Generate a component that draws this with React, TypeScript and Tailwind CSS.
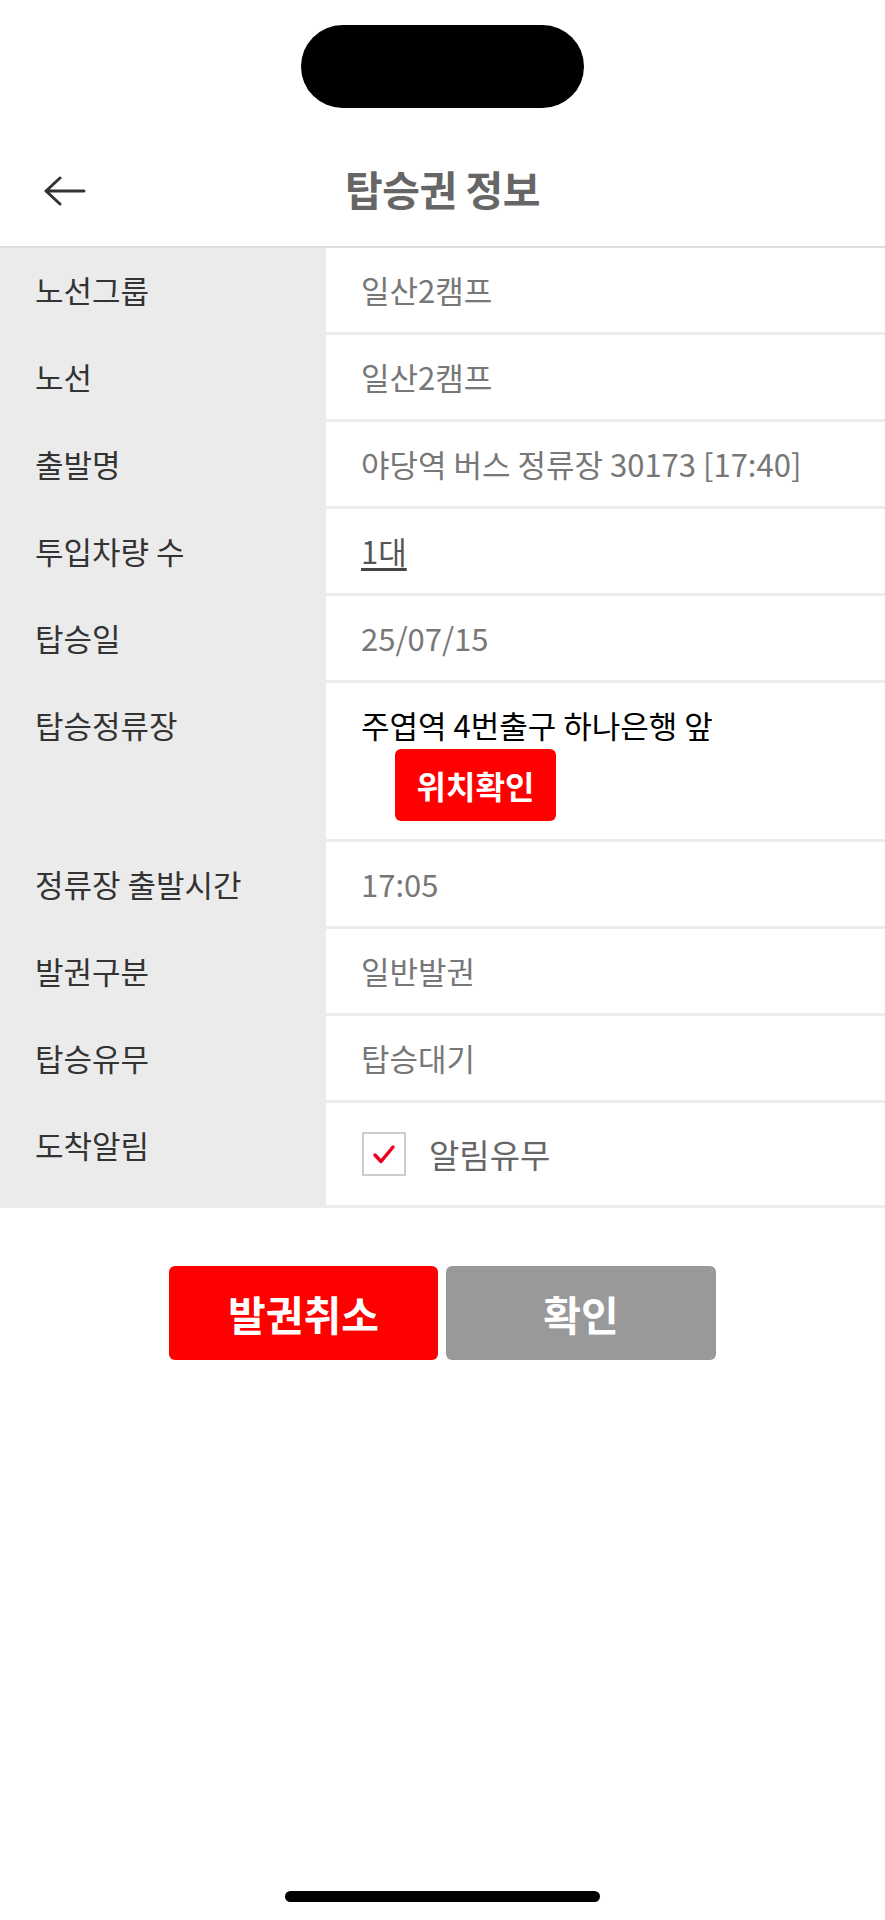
import React from "react";

const rows = [
  { label: "노선그룹", value: "일산2캠프" },
  { label: "노선", value: "일산2캠프" },
  { label: "출발명", value: "야당역 버스 정류장 30173 [17:40]" },
  { label: "투입차량 수", value: "1대", link: true },
  { label: "탑승일", value: "25/07/15" },
];

const rows2 = [
  { label: "정류장 출발시간", value: "17:05" },
  { label: "발권구분", value: "일반발권" },
  { label: "탑승유무", value: "탑승대기" },
];

const Row = ({ label, value, link }: { label: string; value: string; link?: boolean }) => (
  <div className="flex h-[87px]">
    <div className="w-[326px] shrink-0 bg-[#ebebeb] pl-[35px] flex items-center pb-[3px] text-[#333]">
      {label}
    </div>
    <div className="flex-1 pl-[35px] flex items-center border-b-[3px] border-[#ececec] text-[#777]">
      {link ? (
        <span className="underline underline-offset-[4px] decoration-[#444] text-[#555]">{value}</span>
      ) : (
        value
      )}
    </div>
  </div>
);

export default function App() {
  return (
    <div
      className="w-[885px] min-h-[1920px] bg-white flex flex-col text-[31px] leading-[40px]"
      style={{ fontFamily: '"Noto Sans CJK KR", "Noto Sans", sans-serif' }}
    >
      {/* status area */}
      <div className="h-[130px] flex justify-center">
        <div className="mt-[25px] w-[283px] h-[83px] rounded-full bg-black" />
      </div>

      {/* nav */}
      <div className="h-[118px] border-b-2 border-[#dddddd] flex items-center relative">
        <button className="absolute left-[43px] top-[46px]">
          <svg width="44" height="30" viewBox="0 0 44 30" fill="none">
            <path d="M3 15H41M17 2L3 15L17 28" stroke="#333" strokeWidth="3" strokeLinecap="round" strokeLinejoin="round" />
          </svg>
        </button>
        <h1 className="w-full text-center text-[41px] leading-[50px] font-bold text-[#666] tracking-[-0.5px]">탑승권 정보</h1>
      </div>

      {/* table */}
      <div className="flex flex-col">
        {rows.map((r) => (
          <Row key={r.label} {...r} />
        ))}
        <div className="flex h-[159px]">
          <div className="w-[326px] shrink-0 bg-[#ebebeb] pl-[35px] pt-[22px] text-[#333]">탑승정류장</div>
          <div className="flex-1 pl-[35px] pt-[22px] border-b-[3px] border-[#ececec]">
            <div className="text-black">주엽역 4번출구 하나은행 앞</div>
            <button className="ml-[34px] mt-[4px] w-[161px] h-[72px] rounded-[6px] bg-[#ff0000] text-white font-bold text-[32px] flex items-center justify-center">
              위치확인
            </button>
          </div>
        </div>
        {rows2.map((r) => (
          <Row key={r.label} {...r} />
        ))}
        <div className="flex h-[105px]">
          <div className="w-[326px] shrink-0 bg-[#ebebeb] pl-[35px] pt-[22px] text-[#333]">도착알림</div>
          <div className="flex-1 pl-[36px] border-b-[3px] border-[#ececec] flex items-center gap-[23px]">
            <div className="w-[44px] h-[44px] border-2 border-[#cccccc] bg-white flex items-center justify-center">
              <svg width="26" height="22" viewBox="0 0 26 22" fill="none">
                <path d="M4 12L10 18.5L22 4" stroke="#e8001c" strokeWidth="3.5" strokeLinecap="round" strokeLinejoin="round" />
              </svg>
            </div>
            <span className="text-[33px] text-[#666]">알림유무</span>
          </div>
        </div>
      </div>

      {/* buttons */}
      <div className="flex justify-center gap-[8px] mt-[58px]">
        <button className="w-[269px] h-[94px] rounded-[6px] bg-[#ff0000] text-white font-bold text-[41px]">발권취소</button>
        <button className="w-[270px] h-[94px] rounded-[6px] bg-[#999999] text-white font-bold text-[41px]">확인</button>
      </div>

      {/* home indicator */}
      <div className="mt-auto mb-[18px] flex justify-center">
        <div className="w-[315px] h-[11px] rounded-full bg-black" />
      </div>
    </div>
  );
}
